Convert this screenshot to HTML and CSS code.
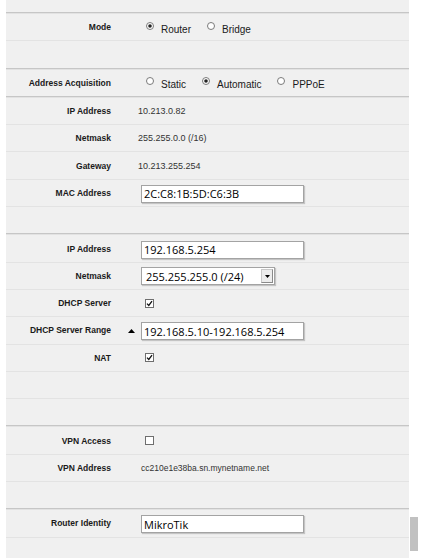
FILE: index.html
```html
<!DOCTYPE html>
<html>
<head>
<meta charset="utf-8">
<link rel="stylesheet" href="styles.css">
</head>
<body>
<div class="page">
  <div class="panel">
    <div class="stub"></div>

    <div class="section">
      <div class="row">
        <div class="label">Mode</div>
        <div class="value options">
          <span class="opt"><svg class="radio" width="8" height="8" viewBox="0 0 8 8"><circle cx="4" cy="4" r="3.5" fill="#fff" stroke="#7a7a7a"/><circle cx="4" cy="4" r="1.8" fill="#222"/></svg><span class="opt-text">Router</span></span>
          <span class="opt"><svg class="radio" width="8" height="8" viewBox="0 0 8 8"><circle cx="4" cy="4" r="3.5" fill="#fff" stroke="#7a7a7a"/></svg><span class="opt-text">Bridge</span></span>
        </div>
      </div>
      <div class="row"></div>
    </div>

    <div class="section">
      <div class="row row-sub">
        <div class="label">Address Acquisition</div>
        <div class="value options">
          <span class="opt"><svg class="radio" width="8" height="8" viewBox="0 0 8 8"><circle cx="4" cy="4" r="3.5" fill="#fff" stroke="#7a7a7a"/></svg><span class="opt-text">Static</span></span>
          <span class="opt"><svg class="radio" width="8" height="8" viewBox="0 0 8 8"><circle cx="4" cy="4" r="3.5" fill="#fff" stroke="#7a7a7a"/><circle cx="4" cy="4" r="1.8" fill="#222"/></svg><span class="opt-text">Automatic</span></span>
          <span class="opt"><svg class="radio" width="8" height="8" viewBox="0 0 8 8"><circle cx="4" cy="4" r="3.5" fill="#fff" stroke="#7a7a7a"/></svg><span class="opt-text">PPPoE</span></span>
        </div>
      </div>
      <div class="row">
        <div class="label">IP Address</div>
        <div class="value text">10.213.0.82</div>
      </div>
      <div class="row">
        <div class="label">Netmask</div>
        <div class="value text">255.255.0.0 (/16)</div>
      </div>
      <div class="row">
        <div class="label">Gateway</div>
        <div class="value text">10.213.255.254</div>
      </div>
      <div class="row">
        <div class="label">MAC Address</div>
        <div class="value control"><input class="field" type="text" value="2C:C8:1B:5D:C6:3B"></div>
      </div>
      <div class="row"></div>
    </div>

    <div class="section">
      <div class="row">
        <div class="label">IP Address</div>
        <div class="value control"><input class="field" type="text" value="192.168.5.254"></div>
      </div>
      <div class="row">
        <div class="label">Netmask</div>
        <div class="value control">
          <div class="select"><span class="select-text">255.255.255.0 (/24)</span><span class="select-btn"><svg width="5" height="3" viewBox="0 0 5 3"><polygon points="0,0 5,0 2.5,3" fill="#000"/></svg></span></div>
        </div>
      </div>
      <div class="row">
        <div class="label">DHCP Server</div>
        <div class="value control"><svg class="check" width="9" height="9" viewBox="0 0 9 9"><rect x="0.5" y="0.5" width="8" height="8" fill="#fff" stroke="#6e6e6e"/><path d="M2 4.6 L3.8 6.5 L7 2.2" fill="none" stroke="#111" stroke-width="1.3"/></svg></div>
      </div>
      <div class="row">
        <div class="label">DHCP Server Range</div>
        <div class="value control has-toggle">
          <svg class="toggle" width="7" height="4" viewBox="0 0 7 4"><polygon points="0,4 7,4 3.5,0" fill="#000"/></svg>
          <input class="field" type="text" value="192.168.5.10-192.168.5.254">
        </div>
      </div>
      <div class="row">
        <div class="label">NAT</div>
        <div class="value control"><svg class="check" width="9" height="9" viewBox="0 0 9 9"><rect x="0.5" y="0.5" width="8" height="8" fill="#fff" stroke="#6e6e6e"/><path d="M2 4.6 L3.8 6.5 L7 2.2" fill="none" stroke="#111" stroke-width="1.3"/></svg></div>
      </div>
      <div class="row"></div>
      <div class="row"></div>
    </div>

    <div class="section">
      <div class="row">
        <div class="label">VPN Access</div>
        <div class="value control"><svg class="check" width="9" height="9" viewBox="0 0 9 9"><rect x="0.5" y="0.5" width="8" height="8" fill="#fff" stroke="#6e6e6e"/></svg></div>
      </div>
      <div class="row">
        <div class="label">VPN Address</div>
        <div class="value text small">cc210e1e38ba.sn.mynetname.net</div>
      </div>
      <div class="row"></div>
    </div>

    <div class="section">
      <div class="row">
        <div class="label">Router Identity</div>
        <div class="value control"><input class="field" type="text" value="MikroTik"></div>
      </div>
      <div class="row"></div>
    </div>
  </div>
  <div class="thumb"></div>
</div>
</body>
</html>
```

FILE: styles.css
```css
html, body {
  margin: 0;
  padding: 0;
  background: #ffffff;
  overflow: hidden;
}

.page {
  position: relative;
  width: 424px;
  height: 558px;
  overflow: hidden;
}

.panel {
  margin-left: 6px;
  width: 403px;
  background: #f0f0f0;
  font-family: "Liberation Sans", Arial, sans-serif;
}

.stub {
  height: 12px;
}

.section {
  border-top: 1px solid #c6c6c6;
  padding-top: 1px;
  box-shadow: inset 0 1px 0 #e2e2e2;
}

.row {
  display: grid;
  grid-template-columns: 105px 1fr;
  align-items: center;
  height: 26.3px;
  border-bottom: 1px solid #e3e3e3;
}

.section > .row:last-child {
  border-bottom: none;
}

.row-sub {
  border-bottom: 1px solid #c6c6c6;
  box-shadow: 0 1px 0 #e2e2e2;
  margin-bottom: 1px;
}

.label {
  text-align: right;
  font-weight: bold;
  font-size: 8.5px;
  color: #1a1a1a;
}

.value {
  display: flex;
  align-items: center;
}

.value.text {
  font-size: 9px;
  color: #333;
  padding-left: 27px;
}

.value.small {
  font-size: 8.5px;
  padding-left: 30px;
}

.value.control {
  padding-left: 30px;
}

.options {
  padding-left: 35px;
  gap: 16px;
}

.opt {
  display: flex;
  align-items: center;
  gap: 7px;
}

.radio {
  display: block;
  margin-bottom: 3px;
}

.opt-text {
  font-size: 10px;
  color: #1a1a1a;
  padding-top: 4px;
}

.field {
  box-sizing: border-box;
  width: 163px;
  height: 18px;
  margin: 2px 0 0 0;
  padding: 0 2px;
  border: 1px solid #a3a3a3;
  box-shadow: 1px 1px 1px rgba(0, 0, 0, 0.18);
  background: #fff;
  font-family: "Open Sans", sans-serif;
  font-size: 11px;
  color: #000;
  outline: none;
}

.has-toggle {
  position: relative;
}

.toggle {
  position: absolute;
  left: 17px;
  top: 50%;
  margin-top: -1px;
}

.select {
  box-sizing: border-box;
  width: 134px;
  height: 18px;
  margin-top: 1px;
  border: 1px solid #a3a3a3;
  box-shadow: 1px 1px 1px rgba(0, 0, 0, 0.18);
  background: #fff;
  display: flex;
  align-items: center;
  justify-content: space-between;
  font-family: "Open Sans", sans-serif;
  font-size: 11px;
  color: #000;
}

.select-text {
  padding-left: 4px;
}

.select-btn {
  box-sizing: border-box;
  width: 12px;
  height: 14px;
  margin-right: 1px;
  background: #ececec;
  border: 1px solid #c8c8c8;
  border-right-color: #8a8a8a;
  border-bottom-color: #8a8a8a;
  display: flex;
  align-items: center;
  justify-content: center;
}

.select-btn svg {
  display: block;
}

.check {
  display: block;
  margin-left: 4px;
}

.thumb {
  position: absolute;
  left: 410px;
  top: 517px;
  width: 8px;
  height: 34px;
  background: #c1c1c1;
}
```
